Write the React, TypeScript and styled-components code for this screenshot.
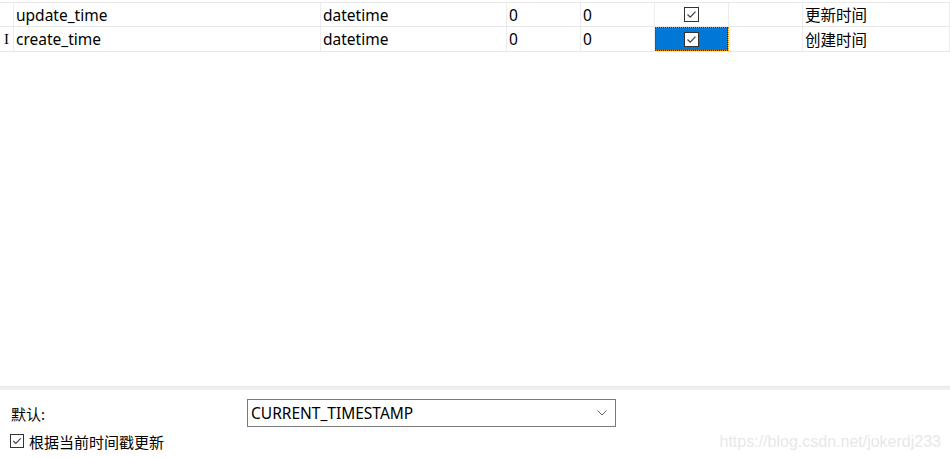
import React from "react";
import styled, { createGlobalStyle } from "styled-components";

const GlobalStyle = createGlobalStyle`
  html, body {
    margin: 0;
    padding: 0;
    background: #ffffff;
  }
  body {
    font-family: "Noto Sans", "Noto Sans CJK SC", sans-serif;
    color: #000000;
  }
`;

const Page = styled.div`
  position: relative;
  width: 950px;
  height: 458px;
  display: flex;
  flex-direction: column;
  overflow: hidden;
`;

const Grid = styled.div`
  flex: 1;
  padding-top: 2px;
`;

const Row = styled.div<{ $first?: boolean }>`
  display: grid;
  grid-template-columns: 14px 307px 186px 74px 74px 74px 74px 1fr;
  height: 25px;
  border-top: ${(p) => (p.$first ? "1px solid #e8e8e8" : "none")};
  border-bottom: 1px solid #e8e8e8;
  box-sizing: border-box;
`;

const Cell = styled.div<{ $selected?: boolean; $center?: boolean }>`
  display: flex;
  align-items: center;
  justify-content: ${(p) => (p.$center ? "center" : "flex-start")};
  padding-left: ${(p) => (p.$center ? "0" : "2px")};
  border-right: 1px solid #ececec;
  font-size: 15.5px;
  white-space: nowrap;
  overflow: hidden;
  box-sizing: border-box;
  position: relative;
  background: ${(p) => (p.$selected ? "#0078d7" : "transparent")};
  ${(p) =>
    p.$selected &&
    `
    outline: 1px dotted #ff8c00;
    outline-offset: -1px;
    &::after {
      content: "";
      position: absolute;
      inset: 0;
      border: 1px dotted #000;
      opacity: 0.55;
    }
  `}
`;

const RowHeader = styled(Cell)`
  padding-left: 4px;
  font-family: "Liberation Serif", serif;
  font-size: 15px;
`;

const Box = styled.span<{ $size?: number }>`
  display: inline-flex;
  align-items: center;
  justify-content: center;
  width: ${(p) => p.$size ?? 15}px;
  height: ${(p) => p.$size ?? 15}px;
  box-sizing: border-box;
  border: 1px solid #333333;
  background: #ffffff;
  flex-shrink: 0;
`;

const Check = ({ size = 15 }: { size?: number }) => (
  <Box $size={size}>
    <svg width={size - 2} height={size - 2} viewBox="0 0 13 13">
      <path d="M2.5 6.5 L5.2 9.1 L10.5 3.6" fill="none" stroke="#444444" strokeWidth="1.3" />
    </svg>
  </Box>
);

const Divider = styled.div`
  height: 4px;
  background: #f0f0f0;
  border-top: 1px solid #e6e6e6;
  box-sizing: border-box;
`;

const Bottom = styled.div`
  height: 68px;
  padding: 9px 0 0 10px;
  box-sizing: border-box;
  display: flex;
  flex-direction: column;
  gap: 6px;
  font-size: 15.5px;
`;

const FieldRow = styled.div`
  display: flex;
  align-items: center;
  height: 28px;
`;

const Label = styled.div`
  width: 236px;
  padding-left: 1px;
  font-size: 15px;
`;

const Select = styled.div`
  width: 369px;
  height: 28px;
  box-sizing: border-box;
  border: 1px solid #7a7a7a;
  display: flex;
  align-items: center;
  justify-content: space-between;
  padding: 0 8px 0 3px;
`;

const CheckRow = styled.div`
  display: flex;
  align-items: center;
  gap: 5px;
  height: 16px;
  font-size: 15px;
`;

const Watermark = styled.div`
  position: absolute;
  right: 9px;
  bottom: 7px;
  font-family: "Liberation Sans", Arial, sans-serif;
  font-size: 16px;
  color: #e8e8e8;
`;

const rows = [
  { name: "update_time", type: "datetime", len: "0", dec: "0", comment: "更新时间", marker: "", selected: false },
  { name: "create_time", type: "datetime", len: "0", dec: "0", comment: "创建时间", marker: "I", selected: true },
];

export default function App() {
  return (
    <Page>
      <GlobalStyle />
      <Grid>
        {rows.map((r, i) => (
          <Row key={r.name} $first={i === 0}>
            <RowHeader>{r.marker}</RowHeader>
            <Cell>{r.name}</Cell>
            <Cell>{r.type}</Cell>
            <Cell>{r.len}</Cell>
            <Cell>{r.dec}</Cell>
            <Cell $center $selected={r.selected}>
              <Check />
            </Cell>
            <Cell />
            <Cell>{r.comment}</Cell>
          </Row>
        ))}
      </Grid>
      <Divider />
      <Bottom>
        <FieldRow>
          <Label>默认:</Label>
          <Select>
            <span>CURRENT_TIMESTAMP</span>
            <svg width="10" height="6" viewBox="0 0 10 6">
              <path d="M0.5 0.5 L5 5 L9.5 0.5" fill="none" stroke="#606060" strokeWidth="1" />
            </svg>
          </Select>
        </FieldRow>
        <CheckRow>
          <Check size={14} />
          <span>根据当前时间戳更新</span>
        </CheckRow>
      </Bottom>
      <Watermark>https://blog.csdn.net/jokerdj233</Watermark>
    </Page>
  );
}
